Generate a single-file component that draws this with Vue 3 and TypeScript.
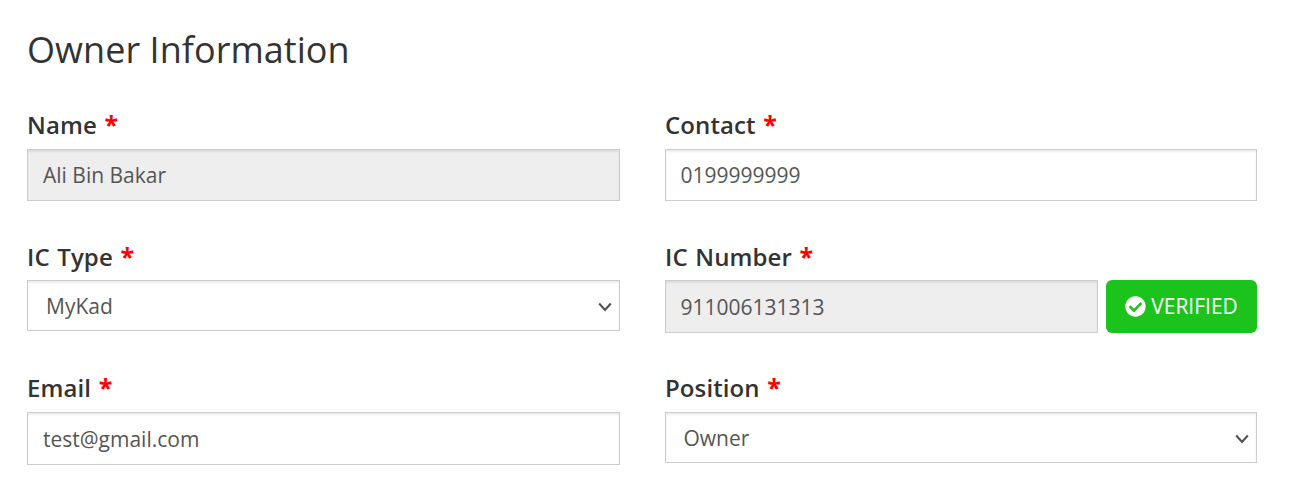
<script setup lang="ts">
interface Field {
  id: string
  label: string
  value: string
  kind: 'input' | 'select'
  readonly?: boolean
  verified?: boolean
}

const fields: Field[] = [
  { id: 'name', label: 'Name', value: 'Ali Bin Bakar', kind: 'input', readonly: true },
  { id: 'contact', label: 'Contact', value: '0199999999', kind: 'input' },
  { id: 'ic-type', label: 'IC Type', value: 'MyKad', kind: 'select' },
  { id: 'ic-number', label: 'IC Number', value: '911006131313', kind: 'input', readonly: true, verified: true },
  { id: 'email', label: 'Email', value: 'test@gmail.com', kind: 'input' },
  { id: 'position', label: 'Position', value: 'Owner', kind: 'select' },
]
</script>

<template>
  <main class="page">
    <h1 class="title">Owner Information</h1>
    <form class="grid" @submit.prevent>
      <div v-for="f in fields" :key="f.id" class="field" :class="f.id">
        <label class="label" :for="f.id">{{ f.label }} <span class="star">*</span></label>
        <div class="row">
          <input v-if="f.kind === 'input'" :id="f.id" class="control" type="text" :value="f.value" :readonly="f.readonly" :class="{ locked: f.readonly }" />
          <div v-else class="select-wrap">
            <select :id="f.id" class="control select">
              <option>{{ f.value }}</option>
            </select>
            <svg class="chevron" viewBox="0 0 14 10" aria-hidden="true"><path d="M1.2 1.5 7 7.9 12.8 1.5" /></svg>
          </div>
          <button v-if="f.verified" class="verified" type="button">
            <svg viewBox="0 0 512 512" aria-hidden="true"><path d="M504 256c0 136.967-111.033 248-248 248S8 392.967 8 256 119.033 8 256 8s248 111.033 248 248zM227.314 387.314l184-184c6.248-6.248 6.248-16.379 0-22.627l-22.627-22.627c-6.248-6.249-16.379-6.249-22.628 0L216 308.118l-70.059-70.059c-6.248-6.248-16.379-6.248-22.628 0l-22.627 22.627c-6.248 6.248-6.248 16.379 0 22.627l104 104c6.249 6.249 16.379 6.249 22.628.001z" /></svg>
            <span>VERIFIED</span>
          </button>
        </div>
      </div>
    </form>
  </main>
</template>

<style>
body { background: #fff; }
</style>

<style scoped>
.page {
  box-sizing: border-box;
  height: 494px;
  padding: 24px 33px 0 27px;
  overflow: hidden;
  font-family: "Open Sans", "Noto Sans", sans-serif;
  color: #333;
}
.title {
  margin: 0;
  height: 52px;
  line-height: 52px;
  font-size: 36px;
  font-weight: 400;
  letter-spacing: 0.05px;
}
.grid {
  display: grid;
  grid-template-columns: 593px 592px;
  grid-template-rows: 131px 132px 100px;
  column-gap: 45px;
  margin-top: 33px;
}
.label {
  display: block;
  height: 40px;
  line-height: 32px;
  font-size: 24px;
  font-weight: 600;
  letter-spacing: 0.1px;
  word-spacing: 1.2px;
  white-space: nowrap;
}
.ic-type .label, .ic-number .label { line-height: 34px; }
.star { color: #f00; font-size: 25px; font-weight: 700; line-height: 1; }
.row { display: flex; gap: 8px; }
.control {
  box-sizing: border-box;
  display: block;
  flex: 1;
  width: 100%;
  min-width: 0;
  height: 52px;
  margin: 0;
  padding: 0 15px;
  border: 1px solid #ccc;
  border-radius: 0;
  outline: none;
  background: #fff;
  box-shadow: inset 0 2px 2px rgba(0, 0, 0, 0.075);
  font: 400 21px "Open Sans", "Noto Sans", sans-serif;
  color: #555;
}
.contact .control, .ic-number .control { padding-left: 14.5px; }
.locked { background: #eee; }
.select-wrap { position: relative; flex: 1; }
.select { appearance: none; height: 51px; padding: 0 18px; }
.position .select { padding-left: 17.5px; }
.chevron {
  position: absolute;
  right: 8px;
  top: 22px;
  width: 14px;
  height: 10px;
  fill: none;
  stroke: #505050;
  stroke-width: 2.1;
}
.verified {
  box-sizing: border-box;
  display: flex;
  align-items: center;
  justify-content: center;
  gap: 5px;
  width: 151px;
  height: 53px;
  padding: 0 0 1px;
  border: 0;
  border-radius: 6px;
  background: #1dc31d;
  color: #fff;
  font: 400 21px "Open Sans", "Noto Sans", sans-serif;
}
.verified svg { width: 21px; height: 21px; fill: #fff; }
.ic-number .control, .email .control { height: 53px; }
</style>
